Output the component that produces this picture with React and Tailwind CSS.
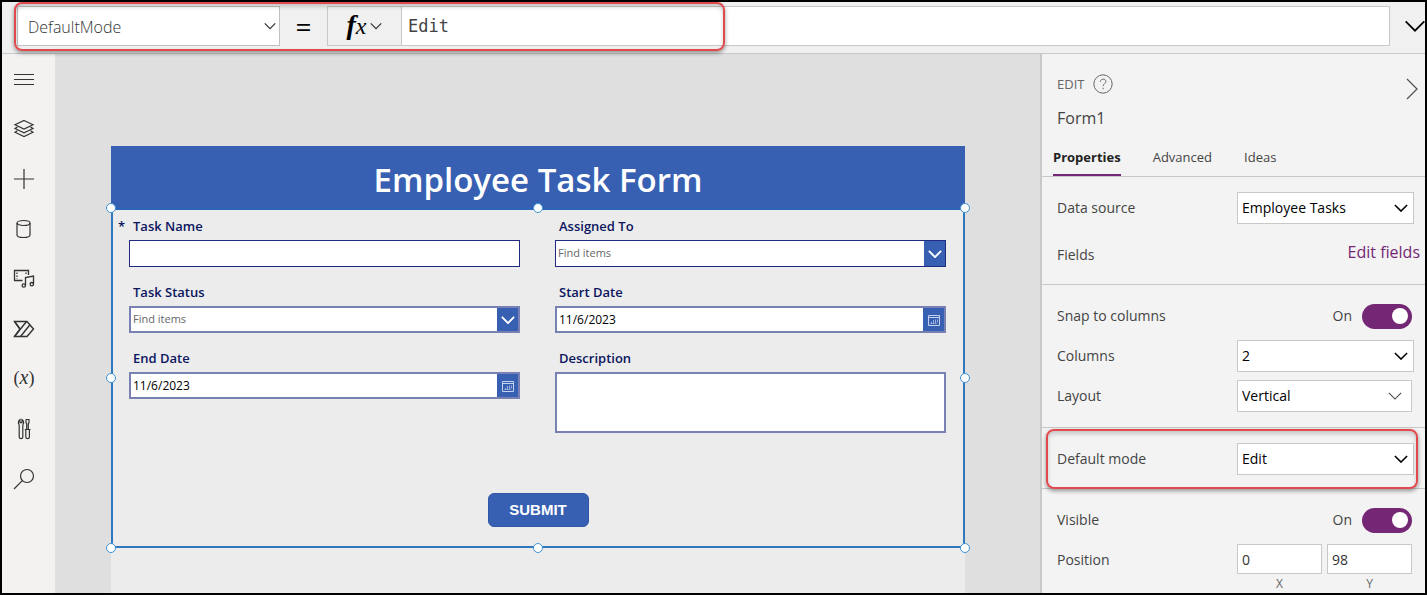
import { useState } from "react";

const Icon = ({ size = 24, stroke = 1.2, className = "", children }) => (
    <svg
        width={size}
        height={size}
        viewBox="0 0 24 24"
        fill="none"
        stroke="currentColor"
        strokeWidth={stroke}
        className={className}
        aria-hidden="true"
    >
        {children}
    </svg>
);

const Chevron = ({ className = "", stroke = 1.3 }) => (
    <svg viewBox="0 0 16 9" fill="none" stroke="currentColor" strokeWidth={stroke} className={className} aria-hidden="true">
        <path d="M1 1l7 7 7-7" />
    </svg>
);

const CalendarIcon = () => (
    <svg width="12" height="12" viewBox="0 0 12 12" fill="none" stroke="currentColor" aria-hidden="true">
        <path d="M.5 1.500h11v10H.5zM.5 3.500h11" />
        <path d="M3.500 8v2M5.500 6v4M7.500 5.500v4M9.500 5.500v3" opacity=".7" />
        <path d="M2 9.500h7" opacity=".4" />
    </svg>
);

const navItems = [
    { label: "Menu", icon: <Icon><path d="M2 7.5h20M2 12.5h20M2 17.5h20" /></Icon> },
    {
        label: "Tree view",
        icon: (
            <Icon>
                <path d="M12 3.500l9 4.300-9 4.300-9-4.300z" />
                <path d="M5.500 10L3 11.500l9 4.300 9-4.300-2.500-1.500" />
                <path d="M5.500 13.800L3 15.300l9 4.300 9-4.300-2.500-1.500" />
            </Icon>
        ),
    },
    { label: "Insert", icon: <Icon><path d="M12 2v20M2 12h20" /></Icon> },
    {
        label: "Data",
        icon: (
            <Icon>
                <ellipse cx="11.500" cy="6" rx="6.500" ry="2.500" />
                <path d="M5 6v12c0 1.400 2.900 2.500 6.500 2.500s6.500-1.100 6.500-2.500V6" />
            </Icon>
        ),
    },
    {
        label: "Media",
        icon: (
            <Icon stroke={1.3}>
                <path d="M10.500 13.500h-8v-10h14V8" />
                <path d="M5 5.500v6.500M14 5.500v3" strokeDasharray="1.500 1.500" />
                <path d="M13.500 18.500v-8l8-1.500v8" />
                <circle cx="11.800" cy="18.500" r="1.700" />
                <circle cx="19.800" cy="17.200" r="1.700" />
            </Icon>
        ),
    },
    {
        label: "Power Automate",
        icon: (
            <Icon stroke={1.4}>
                <path d="M2.500 4.500h12.500l6.500 7.500-6.500 7.500H2.500L8 12z" />
                <path d="M8 12l-5.500-7.500M2.500 19.500L14.500 4.500M8.500 19.500L18 7.800" />
            </Icon>
        ),
    },
    {
        label: "Variables",
        icon: (
            <span className="font-['Liberation_Serif',serif] text-lg leading-6 pb-1">
                (<i className="text-xl leading-6">x</i>)
            </span>
        ),
    },
    {
        label: "Advanced tools",
        icon: (
            <Icon>
                <path d="M8 2.500C6 3.500 6 6.500 7.200 8v12c0 2.200 3.600 2.200 3.600 0V8C12 6.500 12 3.500 10 2.500v3.200H8z" />
                <path d="M14 2.500h3v3l-.7 1.500v5M14 2.500v3l.7 1.500v5M12.800 12.500h5.700M13.800 12.500V20c0 2.200 3.600 2.200 3.600 0v-7.500" />
            </Icon>
        ),
    },
    {
        label: "Search",
        icon: (
            <Icon>
                <circle cx="15" cy="9" r="6.500" />
                <path d="M10.300 13.700L2 22" />
            </Icon>
        ),
    },
];

// Red rounded outline drawn over a region to draw attention to it
const Callout = ({ className }) => (
    <div
        className={`pointer-events-none absolute z-10 rounded-lg border-2 border-[#e04a4e] shadow-[0_2px_4px_rgba(0,0,0,0.4),inset_0_3px_4px_rgba(0,0,0,0.18)] ${className}`}
    />
);

const FormulaBar = () => (
    <header className="relative flex h-[52px] shrink-0 items-center border-b border-[#c8c8c8] bg-[#f0f0f0] pb-1 text-[#333]">
        <div className="relative ml-[15px] w-[263px]">
            <select
                aria-label="Property"
                className="h-10 w-full appearance-none border border-[#c0c0c0] bg-white pl-2.5 pt-0.5 text-base font-light"
            >
                <option>DefaultMode</option>
            </select>
            <Chevron stroke={1.6} className="pointer-events-none absolute right-1 top-4 h-2 w-3" />
        </div>
        <span className="w-[47px] text-center text-[28px] leading-8 text-black">=</span>
        <button
            type="button"
            aria-label="Function"
            className="flex h-10 w-[75px] items-center justify-center gap-1 border border-[#c8c8c8] bg-[#f0f0f0]"
        >
            <i className="font-['Liberation_Serif',serif] text-[28px] leading-8 text-black">
                <span className="font-bold">f</span>
                <span className="text-2xl leading-8">x</span>
            </i>
            <Chevron stroke={1.6} className="h-2 w-3" />
        </button>
        <input
            type="text"
            aria-label="Formula"
            defaultValue="Edit"
            className="h-10 min-w-0 flex-1 border border-l-0 border-[#c8c8c8] bg-white px-1.5 font-['DejaVu_Sans_Mono',monospace] text-[17px] text-[#444] outline-none"
        />
        <button type="button" aria-label="Expand formula bar" className="flex w-[35px] shrink-0 overflow-hidden pl-3.5 text-black">
            <Chevron className="h-3 w-[22px] shrink-0" />
        </button>
        <Callout className="left-3 top-0 h-[49px] w-[711px]" />
    </header>
);

const Sidebar = () => (
    <nav className="flex w-[53px] shrink-0 flex-col bg-[#f3f2f1] text-[#333]">
        {navItems.map((item) => (
            <button key={item.label} type="button" aria-label={item.label} className="flex h-[50px] w-11 items-center justify-center">
                {item.icon}
            </button>
        ))}
    </nav>
);

const Field = ({ id, label, required, children }) => (
    <div className="grid grid-cols-[11px_1fr] content-start gap-y-1">
        <span className="text-[13px] font-semibold leading-5">{required && "*"}</span>
        <label htmlFor={id} className="pl-1 text-[13px] font-semibold leading-5">
            {label}
        </label>
        <div className="col-start-2 flex">{children}</div>
    </div>
);

const ComboBox = ({ id, dark }) => (
    <div className={dark ? "flex h-[27px] flex-1 border border-[#1f2a80]" : "flex h-[27px] flex-1 border-2 border-[#7880b4]"}>
        <input
            id={id}
            type="text"
            placeholder="Find items"
            className="min-w-0 flex-1 bg-white px-0.5 text-[11px] text-black outline-none placeholder:text-[#666]"
        />
        <button type="button" aria-label="Open list" className="flex w-[21px] items-center justify-center bg-[#3860b2] text-white">
            <Chevron stroke={2.2} className="h-2 w-3.5" />
        </button>
    </div>
);

const DateBox = ({ id }) => (
    <div className="flex h-[27px] flex-1 border-2 border-[#7880b4]">
        <input id={id} type="text" defaultValue="11/6/2023" className="min-w-0 flex-1 bg-white px-0.5 text-xs text-black outline-none" />
        <button type="button" aria-label="Pick a date" className="flex w-[21px] items-center justify-center bg-[#3860b2] text-[#c5d2ee]">
            <CalendarIcon />
        </button>
    </div>
);

const handles = [
    "left-0 top-0",
    "left-1/2 top-0",
    "left-full top-0",
    "left-0 top-1/2",
    "left-full top-1/2",
    "left-0 top-full",
    "left-1/2 top-full",
    "left-full top-full",
];

const Selection = () => (
    <div className="pointer-events-none absolute inset-0">
        <div className="absolute inset-0 border-2 border-[#2f78bd] border-t-[#2b66b8]" />
        {handles.map((pos) => (
            <span key={pos} className={`absolute size-[10px] -translate-x-1/2 -translate-y-1/2 rounded-full border border-[#3f93d6] bg-white ${pos}`} />
        ))}
    </div>
);

const Canvas = () => (
    <main className="flex min-w-0 flex-1 flex-col overflow-hidden bg-[#dfdfdf] pl-14 pr-[75px] pt-[92px]">
        <div className="flex-1 bg-[#ececec]">
            <h1 className="flex h-[62px] items-center justify-center bg-[#3860b2] pt-1 text-[33px] font-semibold leading-none text-white">
                Employee Task Form
            </h1>
            <form className="relative h-[340px] text-[#0b1560]" onSubmit={(e) => e.preventDefault()}>
                <div className="grid grid-cols-2 gap-x-6 gap-y-[15px] pl-[7px] pr-[19px] pt-2">
                    <Field id="task-name" label="Task Name" required>
                        <input id="task-name" type="text" className="h-[27px] min-w-0 flex-1 border border-[#1f2a80] bg-white px-1 text-xs outline-none" />
                    </Field>
                    <Field id="assigned-to" label="Assigned To">
                        <ComboBox id="assigned-to" dark />
                    </Field>
                    <Field id="task-status" label="Task Status">
                        <ComboBox id="task-status" />
                    </Field>
                    <Field id="start-date" label="Start Date">
                        <DateBox id="start-date" />
                    </Field>
                    <Field id="end-date" label="End Date">
                        <DateBox id="end-date" />
                    </Field>
                    <Field id="description" label="Description">
                        <textarea id="description" className="h-[61px] flex-1 resize-none border-2 border-[#7880b4] bg-white outline-none" />
                    </Field>
                </div>
                <div className="mt-[60px] flex justify-center">
                    <button
                        type="submit"
                        className="h-[34px] w-[101px] rounded-md border border-[#3056a8] bg-[#3860b2] font-['Liberation_Sans',Arial,sans-serif] text-[15px] font-bold text-white"
                    >
                        SUBMIT
                    </button>
                </div>
                <Selection />
            </form>
        </div>
    </main>
);

const PanelSelect = ({ id, options, thin }) => (
    <div className={thin ? "relative mr-0.5 w-[175px]" : "relative w-[177px]"}>
        <select id={id} className="h-8 w-full appearance-none border border-[#c8c8c8] bg-white pl-1 text-sm text-black">
            {options.map((option) => (
                <option key={option}>{option}</option>
            ))}
        </select>
        <Chevron
            stroke={thin ? 1.2 : 1.8}
            className={
                thin
                    ? "pointer-events-none absolute right-2.5 top-3 h-2 w-3.5"
                    : "pointer-events-none absolute right-1.5 top-3 h-2 w-3.5 text-black"
            }
        />
    </div>
);

const PanelRow = ({ id, label, children }) => (
    <div className="flex h-10 items-center justify-between">
        <label htmlFor={id}>{label}</label>
        {children}
    </div>
);

const Toggle = ({ id }) => {
    const [on, setOn] = useState(true);

    return (
        <div className="mr-0.5 flex items-center gap-2.5">
            <span>{on ? "On" : "Off"}</span>
            <input
                id={id}
                type="checkbox"
                role="switch"
                checked={on}
                onChange={() => setOn(!on)}
                className="flex h-[25px] w-[50px] appearance-none items-center rounded-full bg-[#999] px-1 before:size-4 before:rounded-full before:bg-white checked:justify-end checked:bg-[#742774]"
            />
        </div>
    );
};

const tabs = ["Properties", "Advanced", "Ideas"];

const PropertiesPanel = () => {
    const [activeTab, setActiveTab] = useState("Properties");

    return (
        <aside className="w-[385px] shrink-0 overflow-hidden border-l-2 border-[#c8c8c8] bg-[#f3f3f3] text-sm text-[#444]">
            <div className="flex items-start justify-between pl-[15px] pr-[7px] pt-5">
                <div>
                    <div className="flex h-5 items-center gap-[9px] text-[13px] text-[#666]">
                        <span>EDIT</span>
                        <Icon size={20}>
                            <circle cx="12" cy="12" r="11" />
                            <path d="M8.800 9.300c0-4.300 6.700-4.100 6.700-.3 0 2.700-3.400 2.600-3.400 5.500M12.100 16.500v1.800" />
                        </Icon>
                    </div>
                    <h2 className="mt-3 text-base leading-6">Form1</h2>
                </div>
                <button type="button" aria-label="Collapse panel" className="mt-1 text-[#555]">
                    <svg width="12" height="22" viewBox="0 0 12 22" fill="none" stroke="currentColor" strokeWidth="1.300" aria-hidden="true">
                        <path d="M1 1l10 10L1 21" />
                    </svg>
                </button>
            </div>

            <div role="tablist" className="mt-2 flex h-[39px] gap-8 border-b border-[#c8c8c8] pl-[11px] text-[13px]">
                {tabs.map((tab) => (
                    <button
                        key={tab}
                        type="button"
                        role="tab"
                        aria-selected={tab === activeTab}
                        onClick={() => setActiveTab(tab)}
                        className={
                            tab === activeTab
                                ? "border-b-2 border-[#742774] pt-0.5 font-bold text-[#222]"
                                : "border-b-2 border-transparent pt-0.5"
                        }
                    >
                        {tab}
                    </button>
                ))}
            </div>

            <section className="border-b border-[#c8c8c8] pb-3 pl-[15px] pr-[11px] pt-[11px]">
                <PanelRow id="data-source" label="Data source">
                    <PanelSelect id="data-source" options={["Employee Tasks"]} />
                </PanelRow>
                <div className="-mr-1.5 mt-1 flex h-10 items-center justify-between">
                    <span className="pt-1.5">Fields</span>
                    <a href="#fields" className="text-base text-[#742774]">Edit fields</a>
                </div>
            </section>

            <section className="border-b border-[#c8c8c8] pb-[11px] pl-[15px] pr-[11px] pt-[11px]">
                <PanelRow id="snap" label="Snap to columns">
                    <Toggle id="snap" />
                </PanelRow>
                <PanelRow id="columns" label="Columns">
                    <PanelSelect id="columns" options={["2", "1", "3"]} />
                </PanelRow>
                <PanelRow id="layout" label="Layout">
                    <PanelSelect id="layout" options={["Vertical", "Horizontal"]} thin />
                </PanelRow>
            </section>

            <section className="relative border-b border-[#c8c8c8] pb-[9px] pl-[15px] pr-[11px] pt-[11px]">
                <PanelRow id="default-mode" label="Default mode">
                    <PanelSelect id="default-mode" options={["Edit", "New", "View"]} />
                </PanelRow>
                <Callout className="-bottom-px left-1 right-[7px] top-px" />
            </section>

            <section className="pl-[15px] pr-[13px] pt-[11px]">
                <div className="-mr-0.5">
                    <PanelRow id="visible" label="Visible">
                        <Toggle id="visible" />
                    </PanelRow>
                </div>
                <div className="flex justify-between pt-1">
                    <span className="pt-1.5">Position</span>
                    <div className="flex gap-[5px]">
                        <label className="flex w-[85px] flex-col text-center text-xs text-[#666]">
                            <input type="text" defaultValue="0" className="h-[30px] border border-[#c8c8c8] bg-white px-1 text-sm text-[#333]" />
                            <span className="pt-0.5">X</span>
                        </label>
                        <label className="flex w-[85px] flex-col text-center text-xs text-[#666]">
                            <input type="text" defaultValue="98" className="h-[30px] border border-[#c8c8c8] bg-white px-1 text-sm text-[#333]" />
                            <span className="pt-0.5">Y</span>
                        </label>
                    </div>
                </div>
            </section>
        </aside>
    );
};

const App = () => (
    <div className="flex h-screen flex-col overflow-hidden border-2 border-black font-['Open_Sans',sans-serif]">
        <FormulaBar />
        <div className="flex min-h-0 flex-1">
            <Sidebar />
            <Canvas />
            <PropertiesPanel />
        </div>
    </div>
);

export default App;
